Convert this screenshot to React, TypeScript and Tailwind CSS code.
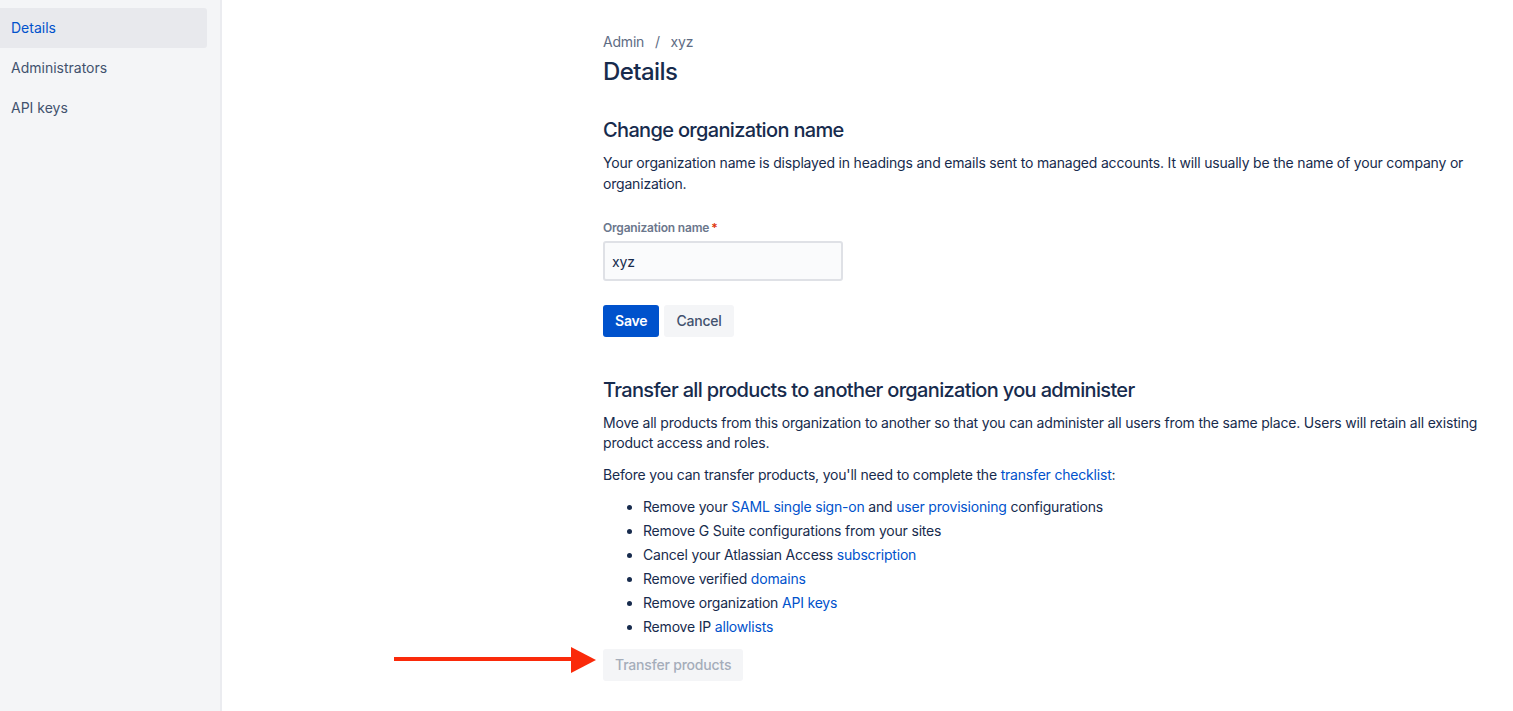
import React, { useState } from 'react';

const NAV_ITEMS = ['Details', 'Administrators', 'API keys'];

const Link: React.FC<{ children: React.ReactNode }> = ({ children }) => (
  <a href="#" className="text-[#0052cc] hover:underline">{children}</a>
);

const App: React.FC = () => {
  const [name, setName] = useState('xyz');

  return (
    <div className="flex min-h-[711px] bg-white font-['Inter',sans-serif] text-[#172b4d] antialiased">
      <aside className="w-[222px] shrink-0 bg-[#f4f5f7] border-r-2 border-[#ebecf0] pt-2">
        {NAV_ITEMS.map((item, i) => (
          <div
            key={item}
            className={`w-[207px] h-10 flex items-center pl-[11px] text-sm rounded-r-[3px] ${
              i === 0 ? 'bg-[#e8e9ed] text-[#0052cc]' : 'text-[#42526e]'
            }`}
          >
            {item}
          </div>
        ))}
      </aside>

      <main className="flex-1 pl-[381px] pr-[20px] pt-8 relative tracking-[-0.012em]">
        <div className="text-sm leading-5 text-[#5e6c84]">
          Admin <span className="mx-[7px]">/</span> xyz
        </div>
        <h1 className="mt-[6px] text-[24px] leading-7 font-medium tracking-[-0.024em]">Details</h1>

        <h2 className="mt-[32px] text-[20px] leading-6 font-medium tracking-[-0.033em]">Change organization name</h2>
        <p className="mt-[11px] text-sm leading-[20.5px]">
          Your organization name is displayed in headings and emails sent to managed accounts. It will usually be the name of your company or organization.
        </p>

        <label className="block mt-[26px] text-xs leading-4 font-semibold text-[#6b778c]">
          Organization name<span className="text-[#de350b] ml-[2px]">*</span>
        </label>
        <input
          value={name}
          onChange={(e) => setName(e.target.value)}
          className="mt-[5px] block w-[240px] h-10 px-[7px] bg-[#fafbfc] border-2 border-[#dfe1e6] rounded-[3px] text-sm text-[#172b4d] outline-none"
        />

        <div className="mt-6 flex gap-[5px]">
          <button className="h-8 px-3 rounded-[3px] bg-[#0052cc] text-white text-sm font-semibold">Save</button>
          <button className="h-8 px-3 rounded-[3px] bg-[#f4f5f7] text-[#42526e] text-sm font-medium">Cancel</button>
        </div>

        <h2 className="mt-[41px] text-[20px] leading-6 font-medium tracking-[-0.033em]">
          Transfer all products to another organization you administer
        </h2>
        <p className="mt-[11px] text-sm leading-5">
          Move all products from this organization to another so that you can administer all users from the same place. Users will retain all existing product access and roles.
        </p>
        <p className="mt-3 text-sm leading-5">
          Before you can transfer products, you'll need to complete the <Link>transfer checklist</Link>:
        </p>
        <ul className="mt-3 pl-10 list-disc text-sm leading-5 space-y-1">
          <li>Remove your <Link>SAML single sign-on</Link> and <Link>user provisioning</Link> configurations</li>
          <li>Remove G Suite configurations from your sites</li>
          <li>Cancel your Atlassian Access <Link>subscription</Link></li>
          <li>Remove verified <Link>domains</Link></li>
          <li>Remove organization <Link>API keys</Link></li>
          <li>Remove IP <Link>allowlists</Link></li>
        </ul>

        <div className="mt-3 relative">
          <button disabled className="h-8 px-3 rounded-[3px] bg-[#f4f5f7] text-[#a5adba] text-sm font-medium cursor-not-allowed">
            Transfer products
          </button>
          {/* annotation arrow */}
          <svg className="absolute left-[-210px] top-[-3px]" width="204" height="28" viewBox="0 0 204 28">
            <line x1="1" y1="13" x2="182" y2="13" stroke="#fa2a0a" strokeWidth="4" />
            <polygon points="178,1 203,14 178,27" fill="#fa2a0a" />
          </svg>
        </div>
      </main>
    </div>
  );
};

export default App;
